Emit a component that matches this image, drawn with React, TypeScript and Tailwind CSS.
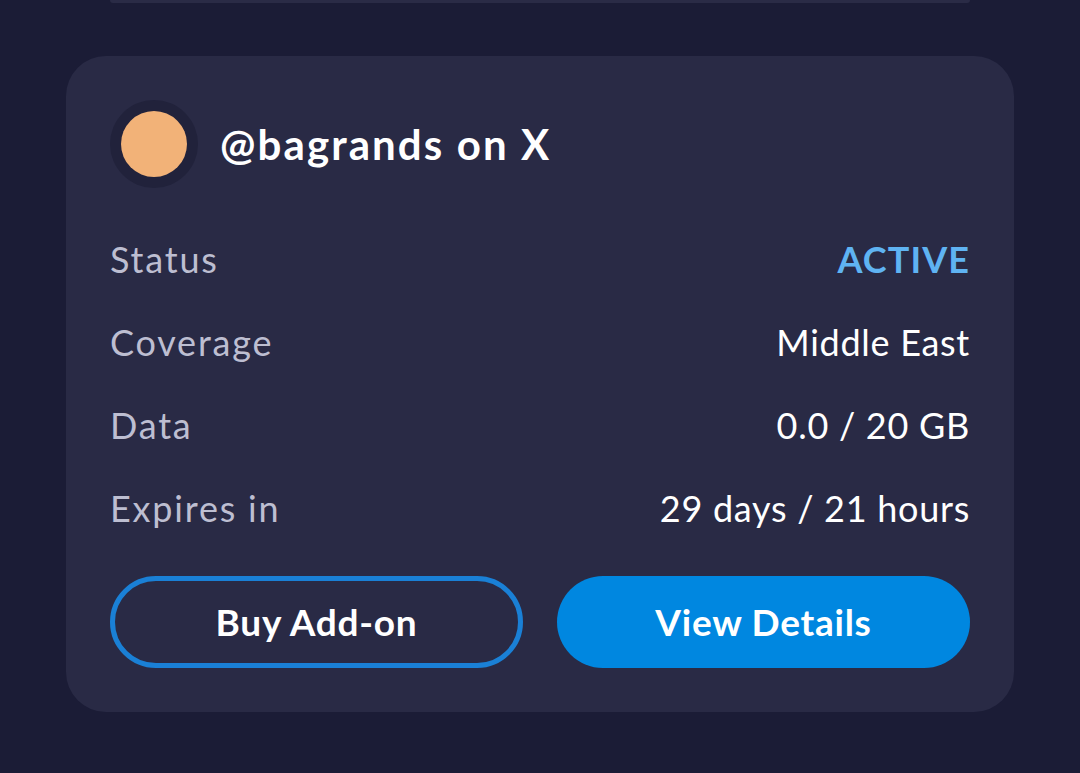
const rows = [
  { label: "Status", value: "ACTIVE", accent: true },
  { label: "Coverage", value: "Middle East" },
  { label: "Data", value: "0.0 / 20 GB" },
  { label: "Expires in", value: "29 days / 21 hours" },
];

export default function App() {
  return (
    <div
      className="w-full h-[773px] overflow-hidden bg-[#1b1c36] flex flex-col items-center"
      style={{ fontFamily: "Lato, 'Noto Sans', sans-serif" }}
    >
      <div className="w-[860px] h-[3px] bg-[#2a2b46] rounded-b" />
      <div className="mt-[53px] w-[948px] rounded-[40px] bg-[#292a45] p-[44px] flex flex-col">
        <div className="flex items-center gap-[22px]">
          <div className="w-[88px] h-[88px] rounded-full bg-[#21223b] flex items-center justify-center">
            <div className="w-[66px] h-[66px] rounded-full bg-[#f2b278]" />
          </div>
          <span className="text-white font-bold text-[42px] tracking-[0.05em] leading-none">@bagrands on X</span>
        </div>
        <div className="mt-[29px] flex flex-col">
          {rows.map((r) => (
            <div key={r.label} className="h-[83px] flex items-center justify-between">
              <span className="text-[#bdbed1] text-[36px] tracking-[0.05em]">{r.label}</span>
              <span
                className={
                  r.accent
                    ? "text-[#5fb3f2] font-bold text-[36px] tracking-[0.03em]"
                    : "text-white text-[36px] tracking-[0.02em]"
                }
              >
                {r.value}
              </span>
            </div>
          ))}
        </div>
        <div className="mt-[27px] grid grid-cols-2 gap-[34px]">
          <button className="h-[92px] rounded-full border-[5px] border-[#1a80d6] text-white font-bold text-[37px] tracking-[0.02em]">
            Buy Add-on
          </button>
          <button className="h-[92px] rounded-full bg-[#0087e0] text-white font-bold text-[37px] tracking-[0.02em]">
            View Details
          </button>
        </div>
      </div>
    </div>
  );
}
